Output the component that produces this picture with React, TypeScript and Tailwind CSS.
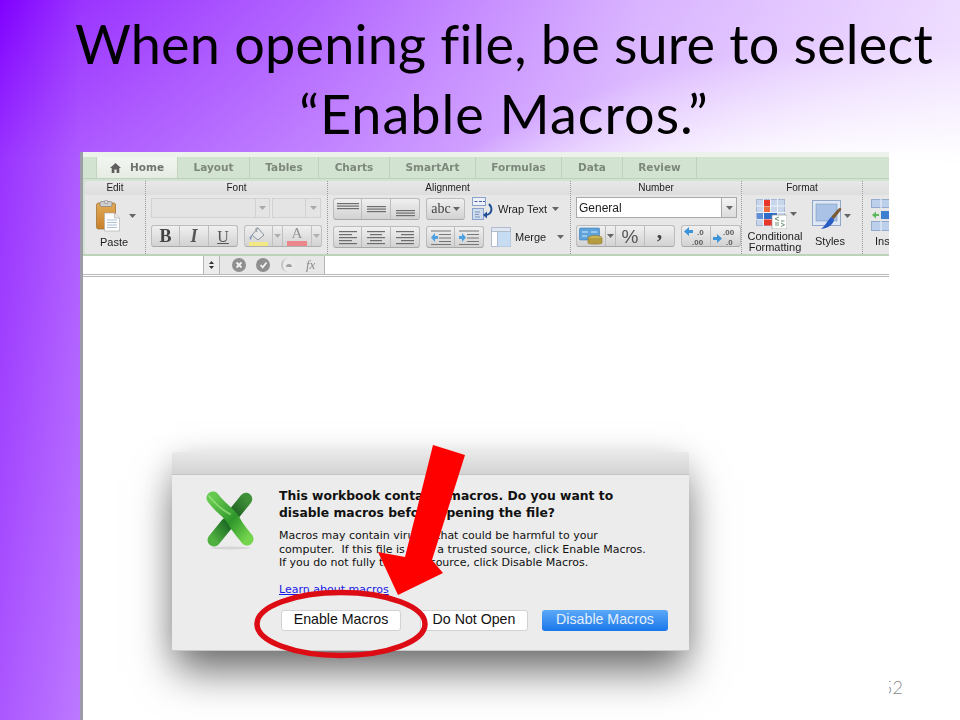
import React from "react";

const Caret = ({ c = "#666" }: { c?: string }) => (
  <svg width="7" height="4" viewBox="0 0 7 4" className="shrink-0"><path d="M0 0h7L3.5 4z" fill={c} /></svg>
);

const Lines = ({ rows, w = 22 }: { rows: [number, number, number][]; w?: number }) => (
  <svg width={w} height="20" viewBox={`0 0 ${w} 20`}>
    {rows.map((r, i) => (
      <rect key={i} x={r[1]} y={r[0]} width={r[2]} height="1.2" fill="#6d6d6d" />
    ))}
  </svg>
);

const Btn = ({ w, children, last }: { w: string; children?: React.ReactNode; last?: boolean }) => (
  <div className={`${w} h-full flex items-center justify-center ${last ? "" : "border-r border-[#bdbdbd]"}`}>{children}</div>
);

const Group = ({ children, className = "" }: { children: React.ReactNode; className?: string }) => (
  <div className={`flex h-[22px] rounded-[3px] border border-[#bcbcbc] border-b-[#a9a9a9] bg-gradient-to-b from-[#f0f0f0] to-[#d2d2d2] ${className}`}>{children}</div>
);

const Paste = () => (
  <svg width="25" height="32" viewBox="0 0 25 32">
    <defs>
      <linearGradient id="pb" x1="0" y1="0" x2="0" y2="1"><stop offset="0" stopColor="#e2aa55" /><stop offset="1" stopColor="#c9802a" /></linearGradient>
    </defs>
    <rect x="0.5" y="3" width="19" height="26" rx="2" fill="url(#pb)" stroke="#9a6a2c" strokeWidth="0.7" />
    <rect x="4" y="1.5" width="12" height="5" rx="1.5" fill="#cfcfcf" stroke="#808080" strokeWidth="0.7" />
    <circle cx="10" cy="2" r="1.8" fill="#dcdcdc" stroke="#808080" strokeWidth="0.6" />
    <path d="M8.5 13h10l5 5v13h-15z" fill="#fdfdfd" stroke="#a8a8a8" strokeWidth="0.6" />
    <path d="M18.5 13v5h5" fill="#e6e6e6" stroke="#a8a8a8" strokeWidth="0.6" />
    <path d="M11 20h10M11 22.5h10M11 25h10M11 27.5h10" stroke="#9ab3cc" strokeWidth="0.8" />
  </svg>
);

const Fill = () => (
  <svg width="22" height="20" viewBox="0 0 22 20">
    <path d="M10 2l6 7-6 5-6-5z" fill="#e8e8e8" stroke="#7d8b95" strokeWidth="1" />
    <path d="M10 2c-2-1-3 2-1 4" fill="none" stroke="#7d8b95" strokeWidth="1" />
    <path d="M4 9c-2 1-3 3-2 5 1-1 2-2 2-5z" fill="#6e8fb0" />
    <rect x="1" y="16" width="19" height="4" fill="#f5ea7a" />
  </svg>
);

const LetterA = () => (
  <div className="w-[20px] flex flex-col items-center">
    <span className="font-['Liberation_Serif',serif] text-[15px] leading-[15px] text-[#8a8a8a]">A</span>
    <div className="w-[20px] h-[5px] bg-[#ec7c80]" />
  </div>
);

const Wrap = () => (
  <svg width="22" height="23" viewBox="0 0 22 23">
    <rect x="0.5" y="0.5" width="13" height="8" fill="#eef2f8" stroke="#8aa1c9" />
    <path d="M2.5 4.5h3M7 4.5h3M11 4.5h2" stroke="#3f5f9c" strokeWidth="1" />
    <rect x="0.5" y="11.5" width="11" height="11" fill="#cfdcf0" stroke="#8aa1c9" />
    <path d="M3 15h5M3 17.5h4M3 20h5" stroke="#7d93b8" />
    <path d="M17 7c4 4 3 10-3 11" fill="none" stroke="#1f4f95" strokeWidth="2" />
    <path d="M15 14.5v7l-4-3.5z" fill="#1f4f95" />
  </svg>
);

const Merge = () => (
  <svg width="20" height="20" viewBox="0 0 20 20">
    <rect x="0.5" y="0.5" width="19" height="19" fill="#fff" stroke="#b0bdd0" />
    <rect x="7" y="5" width="12.5" height="14.5" fill="#c5dcf3" />
    <rect x="0.5" y="0.5" width="19" height="4" fill="#dfe6ef" stroke="#b0bdd0" />
    <path d="M6.5 5v14" stroke="#b0bdd0" />
  </svg>
);

const Indent = ({ flip }: { flip?: boolean }) => (
  <svg width="22" height="18" viewBox="0 0 22 18">
    <path d="M1 3h20M9 6.5h12M9 10h12M9 13.5h12M1 16.5h20" stroke="#777" strokeWidth="1.1" />
    {flip ? <path d="M1 8h3V5l4 4.5-4 4.5v-3H1z" fill="#4ea0e0" /> : <path d="M8 8H5V5L1 9.5 5 14v-3h3z" fill="#4ea0e0" />}
  </svg>
);

const Currency = () => (
  <svg width="24" height="20" viewBox="0 0 24 20">
    <rect x="0.5" y="2" width="20" height="12" rx="1" fill="#5fa3dc" stroke="#3c79b3" strokeWidth="0.6" />
    <path d="M3 6h6M12 6h6M3 10h5" stroke="#d7ecff" strokeWidth="1" />
    <ellipse cx="16" cy="12" rx="7" ry="2.5" fill="#cdb65a" stroke="#8e7b2d" strokeWidth="0.6" />
    <path d="M9 12v5c0 1.5 14 1.5 14 0v-5" fill="#b59c41" stroke="#8e7b2d" strokeWidth="0.6" />
  </svg>
);

const Decimal = ({ inc }: { inc?: boolean }) => (
  <svg width="27" height="19" viewBox="0 0 27 19">
    {inc ? (
      <path d="M1 10h4V7l5 4.500L5 16v-3H1z" fill="#3d93da" />
    ) : (
      <path d="M10 3H6V0L1 4.500 6 9V6h4z" fill="#3d93da" />
    )}
    <text x={inc ? "11" : "14"} y="7.500" fontFamily="Liberation Sans, sans-serif" fontSize="8" fontWeight="700" fill="#5a5a5a">{inc ? ".00" : ".0"}</text>
    <text x={inc ? "14" : "9"} y="17.500" fontFamily="Liberation Sans, sans-serif" fontSize="8" fontWeight="700" fill="#5a5a5a">{inc ? ".0" : ".00"}</text>
  </svg>
);

const CondFormat = () => (
  <svg width="31" height="30" viewBox="0 0 31 30">
    <rect x="0.5" y="0.5" width="28" height="26" fill="#c8d6ec" stroke="#a8b8d4" />
    <path d="M7.5 0v27M14.5 0v27M21.5 0v27M0 7h29M0 13.5h29M0 20h29" stroke="#eef3fa" />
    <rect x="8" y="1" width="6" height="6" fill="#e8362a" />
    <rect x="8" y="7.500" width="6" height="5.500" fill="#ef6a3a" />
    <rect x="8" y="14" width="13" height="6" fill="#2f6dc8" />
    <rect x="8" y="20.500" width="9" height="6" fill="#e8362a" />
    <rect x="1" y="14" width="6" height="6" fill="#5f8fd8" />
    <rect x="16" y="16" width="15" height="14" rx="1" fill="#fff" stroke="#999" strokeWidth="0.7" />
    <path d="M23 18l-4 1.800 4 1.800M25 22h3.500M19 24h4M19 26h4M25 24l3.500 1.800-3.500 1.800" fill="none" stroke="#4a7a55" strokeWidth="0.8" />
  </svg>
);

const StylesIcon = () => (
  <svg width="32" height="31" viewBox="0 0 32 31">
    <rect x="0.5" y="0.5" width="28" height="25" fill="#dfe8f5" stroke="#93a8c8" />
    <rect x="4" y="4" width="21" height="17" fill="#a9c2e6" stroke="#7d97c0" strokeWidth="0.6" />
    <path d="M26 9c2-2 4-1 3 1l-7 9-3-2z" fill="#7a5a34" />
    <path d="M19 17l3 2c0 5-5 9-13 10 4-3 6-8 10-12z" fill="#2a5dc4" />
  </svg>
);

const InsertIcon = () => (
  <svg width="20" height="32" viewBox="0 0 20 32">
    <rect x="0.5" y="0.5" width="20" height="8" fill="#bcd0ec" stroke="#94aace" />
    <path d="M10 0v9" stroke="#eef3fa" />
    <path d="M1 15h3v-2.500l4 3.500-4 3.500V17H1z" fill="#5cb85c" transform="rotate(180 4.500 16)" />
    <rect x="10" y="12" width="10" height="8" fill="#3d7fd0" />
    <rect x="0.5" y="22.500" width="20" height="9" fill="#bcd0ec" stroke="#94aace" />
    <path d="M10 22v10" stroke="#eef3fa" />
  </svg>
);

const Round = ({ children }: { children: React.ReactNode }) => (
  <div className="w-[14px] h-[14px] rounded-full bg-[#8f8f8f] flex items-center justify-center">{children}</div>
);

const tabs: [string, string][] = [
  ["Layout", "w-[72px]"],
  ["Tables", "w-[69px]"],
  ["Charts", "w-[71px]"],
  ["SmartArt", "w-[86px]"],
  ["Formulas", "w-[86px]"],
  ["Data", "w-[61px]"],
  ["Review", "w-[74px]"],
];

const Label = ({ children }: { children: React.ReactNode }) => (
  <div className="h-[14px] bg-gradient-to-b from-[#e8e8e8] to-[#dedede] text-center text-[10px] leading-[14px] text-[#222]">{children}</div>
);

const Excel = () => (
  <svg width="52" height="62" viewBox="0 0 52 62">
    <defs>
      <linearGradient id="xa" x1="0" y1="0" x2="1" y2="1"><stop offset="0" stopColor="#66c94f" /><stop offset="0.55" stopColor="#2f972b" /><stop offset="1" stopColor="#74d44c" /></linearGradient>
      <linearGradient id="xb" x1="1" y1="0" x2="0" y2="1"><stop offset="0" stopColor="#3f8f38" /><stop offset="1" stopColor="#1c5f20" /></linearGradient>
      <linearGradient id="xc" x1="1" y1="0" x2="0" y2="1"><stop offset="0" stopColor="#1f6e26" /><stop offset="1" stopColor="#4fb040" /></linearGradient>
    </defs>
    <ellipse cx="26" cy="58" rx="20" ry="1.500" fill="#d6d6d6" />
    <path d="M42 9L29 25" stroke="url(#xb)" strokeWidth="12.500" strokeLinecap="round" />
    <path d="M23 34L10 50" stroke="url(#xc)" strokeWidth="13" strokeLinecap="round" />
    <path d="M9 8C17 19 26 23 30 31S37 41 43 49" fill="none" stroke="url(#xa)" strokeWidth="13" strokeLinecap="round" />
    <path d="M5 6C13 16 20 21 26 24" fill="none" stroke="#a6ec89" strokeWidth="2" strokeLinecap="round" opacity="0.6" />
  </svg>
);

export default function App() {
  return (
    <div className="relative w-[960px] h-[720px] overflow-hidden font-['Liberation_Sans',sans-serif] bg-[radial-gradient(ellipse_800px_680px_at_900px_720px,#ffffff_82%,rgba(255,255,255,0)_100%),linear-gradient(to_bottom,rgba(255,255,255,0),rgba(255,255,255,0.2)_160px,rgba(255,255,255,0.34)_720px),linear-gradient(to_right,#8000ff,#9a33ff_80px,#b366ff_320px,#d9b3ff_640px,#eedcff_960px)]">
      <div className="absolute right-[57px] bottom-[23px] font-['Lato',sans-serif] font-light text-[18px] leading-[20px] text-[#8a8a8a]">52</div>

      <h1 className="h-[152px] pl-[48px] pt-[9px] text-center font-['Lato',sans-serif] font-normal text-[54px] leading-[70px] text-black">
        <div className="tracking-[0.2px]">When opening file, be sure to select</div>
        <div className="tracking-[1px]">“Enable Macros.”</div>
      </h1>

      <div className="relative ml-[80px] w-[809px] h-[568px] border-l-[3px] border-[#9b9bab] bg-white flex flex-col">
        {/* tabs */}
        <div className="h-[29px] shrink-0 bg-[#d3e3d1] blur-[0.3px]">
          <div className="h-[5px] bg-[#edf2ec]" />
          <div className="flex h-[22px] pl-[13px] border-b border-[#bdd2bb]">
            <div className="w-[82px] flex items-center justify-center gap-[9px] bg-gradient-to-b from-[#f2f6f0] to-[#e6ece4] border-x border-[#c2d3c0]">
              <svg width="11" height="10" viewBox="0 0 11 10"><path d="M5.500 0L11 5H9.300v5H6.600V6.600H4.400V10H1.700V5H0z" fill="#5f5f5f" /></svg>
              <span className="font-['DejaVu_Sans',sans-serif] font-bold text-[10.5px] text-[#6e756e]">Home</span>
            </div>
            {tabs.map(([t, w]) => (
              <div key={t} className={`${w} flex items-center justify-center border-r border-[#bfd2bd] font-['DejaVu_Sans',sans-serif] font-bold text-[10.5px] text-[#7c887c]`}>{t}</div>
            ))}
          </div>
        </div>

        {/* ribbon */}
        <div className="h-[75px] shrink-0 pl-[2px] bg-[#d3e3d1] border-b-2 border-[#bcd3ba] blur-[0.3px]">
          <div className="h-full flex rounded-tl-[4px] bg-[#e7e7e7] overflow-hidden text-[11px] leading-[11px] text-[#1c1c1c]">
            {/* Edit */}
            <div className="w-[61px] shrink-0 border-r border-dotted border-[#999]">
              <Label>Edit</Label>
              <div className="pl-[11px] pt-[5px] flex items-center gap-[8px]">
                <Paste />
                <Caret />
              </div>
              <div className="pl-[15px] pt-[5px]">Paste</div>
            </div>

            {/* Font */}
            <div className="w-[182px] shrink-0 border-r border-dotted border-[#999]">
              <Label>Font</Label>
              <div className="pl-[5px] pt-[2px] flex flex-col gap-[6px]">
                <div className="flex h-[22px] gap-[2px] pt-[1px] pb-[1px]">
                  <div className="w-[119px] flex border border-[#d2d2d2] bg-[#e4e4e4]">
                    <div className="flex-1 border-r border-[#d2d2d2]" />
                    <div className="w-[13px] flex items-center justify-center"><Caret c="#aaa" /></div>
                  </div>
                  <div className="w-[49px] flex border border-[#d2d2d2] bg-[#e4e4e4]">
                    <div className="flex-1 border-r border-[#d2d2d2]" />
                    <div className="w-[14px] flex items-center justify-center"><Caret c="#aaa" /></div>
                  </div>
                </div>
                <div className="flex gap-[6px]">
                  <Group>
                    <Btn w="w-[28px]"><span className="font-['Liberation_Serif',serif] font-bold text-[18px] text-[#444]">B</span></Btn>
                    <Btn w="w-[29px]"><span className="font-['Liberation_Serif',serif] italic font-bold text-[18px] text-[#555]">I</span></Btn>
                    <Btn w="w-[28px]" last><span className="font-['Liberation_Serif',serif] underline text-[16px] text-[#555]">U</span></Btn>
                  </Group>
                  <Group className="opacity-90">
                    <Btn w="w-[28px]"><Fill /></Btn>
                    <Btn w="w-[10px]"><Caret c="#aaa" /></Btn>
                    <Btn w="w-[29px]"><LetterA /></Btn>
                    <Btn w="w-[9px]" last><Caret c="#aaa" /></Btn>
                  </Group>
                </div>
              </div>
            </div>

            {/* Alignment */}
            <div className="w-[243px] shrink-0 border-r border-dotted border-[#999]">
              <Label><span className="pr-[3px]">Alignment</span></Label>
              <div className="pl-[5px] pt-[2px] flex flex-col gap-[6px]">
                <div className="flex items-center">
                  <Group>
                    <Btn w="w-[28px]"><Lines rows={[[4, 0, 22], [6.5, 0, 22], [9, 0, 22]]} /></Btn>
                    <Btn w="w-[29px]"><Lines rows={[[7, 2, 19], [9.5, 2, 19], [12, 2, 19]]} /></Btn>
                    <Btn w="w-[28px]" last><Lines rows={[[11, 2, 19], [13.5, 2, 19], [16, 2, 19]]} /></Btn>
                  </Group>
                  <Group className="ml-[6px] w-[39px] items-center justify-center gap-[2px]">
                    <span className="font-['Liberation_Serif',serif] text-[14px] leading-[14px] text-[#444]">abc</span>
                    <Caret />
                  </Group>
                  <div className="ml-[7px]"><Wrap /></div>
                  <span className="ml-[4px] w-[54px] pt-[1px]">Wrap Text</span>
                  <Caret />
                </div>
                <div className="flex items-center">
                  <Group>
                    <Btn w="w-[28px]"><Lines rows={[[4, 2, 18], [7, 2, 13], [10, 2, 18], [13, 2, 13], [16, 2, 18]]} /></Btn>
                    <Btn w="w-[29px]"><Lines rows={[[4, 2, 18], [7, 5, 12], [10, 2, 18], [13, 5, 12], [16, 2, 18]]} /></Btn>
                    <Btn w="w-[28px]" last><Lines rows={[[4, 2, 18], [7, 7, 13], [10, 2, 18], [13, 7, 13], [16, 2, 18]]} /></Btn>
                  </Group>
                  <Group className="ml-[6px]">
                    <Btn w="w-[28px]"><Indent /></Btn>
                    <Btn w="w-[28px]" last><Indent flip /></Btn>
                  </Group>
                  <div className="ml-[7px]"><Merge /></div>
                  <span className="ml-[4px] w-[42px]">Merge</span>
                  <Caret />
                </div>
              </div>
            </div>

            {/* Number */}
            <div className="w-[171px] shrink-0 border-r border-dotted border-[#999]">
              <Label>Number</Label>
              <div className="pl-[5px] pt-[2px] flex flex-col gap-[6px]">
                <div className="flex h-[22px] pb-[1px] w-[161px]">
                  <div className="flex-1 bg-white border border-[#aaa] flex items-center pl-[2px] pt-[1px] text-[12px]">General</div>
                  <div className="w-[15px] border-y border-r border-[#aaa] bg-gradient-to-b from-[#f4f4f4] to-[#dcdcdc] flex items-center justify-center"><Caret /></div>
                </div>
                <div className="flex gap-[6px]">
                  <Group>
                    <Btn w="w-[29px]"><Currency /></Btn>
                    <Btn w="w-[10px]"><Caret /></Btn>
                    <Btn w="w-[29px]"><span className="text-[19px] leading-[19px] text-[#555]">%</span></Btn>
                    <Btn w="w-[29px]" last><span className="font-['Liberation_Serif',serif] font-bold text-[22px] leading-[8px] pb-[10px] text-[#444]">,</span></Btn>
                  </Group>
                  <Group>
                    <Btn w="w-[29px]"><Decimal /></Btn>
                    <Btn w="w-[29px]" last><Decimal inc /></Btn>
                  </Group>
                </div>
              </div>
            </div>

            {/* Format */}
            <div className="w-[121px] shrink-0 border-r border-dotted border-[#999]">
              <Label>Format</Label>
              <div className="flex pt-[4px]">
                <div className="w-[66px] flex flex-col items-center">
                  <div className="flex items-center gap-[3px] pl-[3px] h-[30px]"><CondFormat /><Caret /></div>
                  <div className="pt-[2px] text-center">Conditional<br />Formatting</div>
                </div>
                <div className="w-[44px] flex flex-col items-center">
                  <div className="flex items-center pl-[3px] pt-[1px]"><StylesIcon /><Caret /></div>
                  <div className="pt-[5px]">Styles</div>
                </div>
              </div>
            </div>

            {/* Insert */}
            <div className="flex-1 overflow-hidden">
              <div className="h-[14px] bg-gradient-to-b from-[#e8e8e8] to-[#dedede]" />
              <div className="pl-[8px] pt-[4px]"><InsertIcon /></div>
              <div className="pl-[12px] pt-[5px] whitespace-nowrap">Insert</div>
            </div>
          </div>
        </div>

        {/* formula bar */}
        <div className="h-[21px] shrink-0 flex border-b-[3px] border-double border-[#b9b9b9] bg-white blur-[0.3px]">
          <div className="w-[120px] shrink-0" />
          <div className="w-[17px] shrink-0 border-x border-[#b5b5b5] bg-[#ececec] flex flex-col items-center justify-center gap-[2px]">
            <svg width="5" height="3" viewBox="0 0 5 3"><path d="M0 3h5L2.500 0z" fill="#333" /></svg>
            <svg width="5" height="3" viewBox="0 0 5 3"><path d="M0 0h5L2.500 3z" fill="#333" /></svg>
          </div>
          <div className="w-[105px] shrink-0 border-r border-[#b5b5b5] bg-[#e7e7e7] flex items-center pl-[12px]">
            <Round><svg width="8" height="8" viewBox="0 0 8 8"><path d="M1.500 1.500l5 5M6.500 1.500l-5 5" stroke="#f2f2f2" strokeWidth="1.800" /></svg></Round>
            <div className="ml-[10px]"><Round><svg width="9" height="8" viewBox="0 0 9 8"><path d="M1.500 4l2.200 2.400L7.500 1.500" fill="none" stroke="#f2f2f2" strokeWidth="1.800" /></svg></Round></div>
            <div className="ml-[11px] w-[14px] h-[14px] rounded-full border-l-2 border-[#c4c4c4] bg-[#eaeaea] flex items-center justify-center">
              <div className="w-[6px] h-[3px] rounded-t-full bg-[#a0a0a0]" />
            </div>
            <span className="ml-[11px] font-['Liberation_Serif',serif] italic text-[13px] text-[#888]">fx</span>
          </div>
          <div className="flex-1" />
        </div>

        {/* sheet */}
        <div className="flex-1 pl-[89px] pt-[175px]">
          <div className="w-[517px] h-[199px] rounded-t-[4px] bg-[#ececec] border-b border-[#c9c9c9] shadow-[0_24px_40px_-4px_rgba(0,0,0,0.55),0_4px_30px_rgba(0,0,0,0.12)] flex flex-col">
            <div className="h-[23px] shrink-0 rounded-t-[4px] bg-gradient-to-b from-[#e9e9e9] to-[#d3d3d3] border-b border-[#c4c4c4]" />
            <div className="flex flex-1">
              <div className="w-[107px] shrink-0 pl-[32px] pt-[15px]"><Excel /></div>
              <div className="flex-1 font-['DejaVu_Sans',sans-serif] text-[#111]">
                <div className="pt-[13px] font-bold text-[12.35px] leading-[17px] whitespace-nowrap">
                  This workbook contains macros. Do you want to<br />disable macros before opening the file?
                </div>
                <div className="pt-[7px] text-[11px] leading-[13.5px] whitespace-pre">{"Macros may contain viruses that could be harmful to your\ncomputer.  If this file is from a trusted source, click Enable Macros.\nIf you do not fully trust the source, click Disable Macros."}</div>
                <div className="pt-[13px] text-[11px] leading-[14px] text-[#1a1ae6] underline">Learn about macros</div>
                <div className="pt-[13px] pl-[2px] flex font-['Liberation_Sans',sans-serif] text-[14.2px]">
                  <div className="w-[120px] h-[21px] rounded-[3px] bg-white border border-[#d2d2d2] flex items-center justify-center">Enable Macros</div>
                  <div className="ml-[19px] w-[108px] h-[21px] rounded-[3px] bg-white border border-[#d2d2d2] flex items-center justify-center">Do Not Open</div>
                  <div className="ml-[14px] w-[126px] h-[21px] rounded-[3px] bg-gradient-to-b from-[#5aa9f7] to-[#1676ea] text-[#e4effb] flex items-center justify-center">Disable Macros</div>
                </div>
              </div>
            </div>
          </div>
        </div>
      </div>

      {/* annotation arrow and ring */}
      <svg className="absolute left-0 top-0 pointer-events-none" width="960" height="720" viewBox="0 0 960 720">
        <ellipse cx="341" cy="624" rx="84" ry="31.500" fill="none" stroke="#dc0b14" strokeWidth="5.500" />
        <path d="M433 445L465 455L432 560L443 573L398 595L378 552L405 557Z" fill="#ff0000" />
      </svg>
    </div>
  );
}
